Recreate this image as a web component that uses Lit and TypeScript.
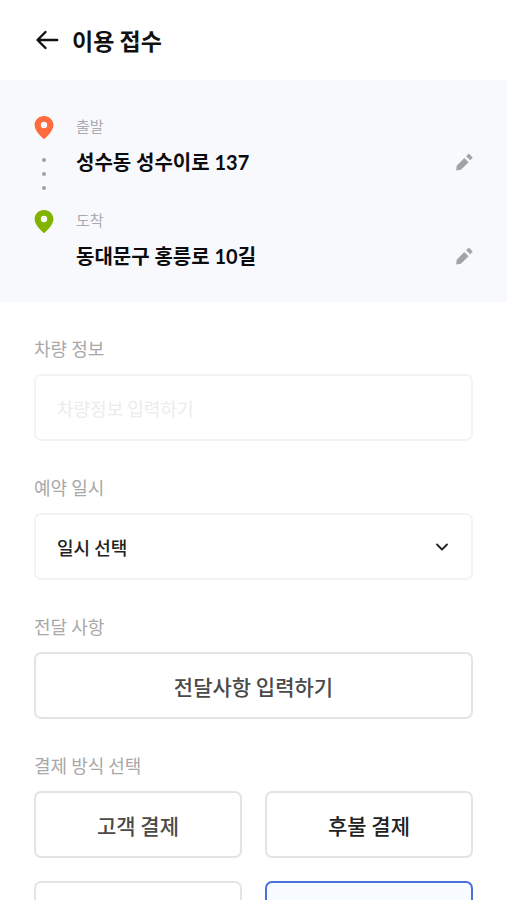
import { LitElement, html, css } from "lit";
import { customElement, property, state } from "lit/decorators.js";
import { classMap } from "lit/directives/class-map.js";

@customElement("route-stop")
class RouteStop extends LitElement {
  @property() label = "";
  @property() address = "";
  @property() kind = "start";

  static styles = css`
    :host {
      display: block;
    }
    .stop {
      display: grid;
      grid-template-columns: 20px 1fr 32px;
      column-gap: 22px;
      align-items: start;
    }
    .pin {
      display: block;
      width: 20px;
      height: 26px;
    }
    .start {
      fill: #ff6b3d;
    }
    .end {
      fill: #82b300;
    }
    .label {
      font-size: 15px;
      line-height: 24px;
      color: #a9abb0;
    }
    .dots {
      display: flex;
      flex-direction: column;
      align-items: center;
      gap: 10px;
      padding-top: 18px;
    }
    .dot {
      width: 4px;
      height: 4px;
      border-radius: 50%;
      background: #a0a1a6;
    }
    .address {
      grid-column: 2;
      font-family: "Lato", "Noto Sans CJK KR", sans-serif;
      font-size: 20px;
      font-weight: 700;
      line-height: 44px;
      color: #0c0c0e;
    }
    .edit {
      justify-self: end;
      display: flex;
      padding: 13px 0;
      border: 0;
      background: none;
      cursor: pointer;
    }
    .pencil {
      width: 18px;
      height: 18px;
      fill: #a2a3a5;
    }
  `;

  render() {
    return html`
      <div class="stop">
        <svg class=${classMap({ pin: true, start: this.kind === "start", end: this.kind === "end" })} viewBox="0 0 20 26" aria-hidden="true">
          <path fill-rule="evenodd" d="M10 2C4.700 2 .600 6.100.600 11.100c0 3.300 1.900 6.300 4.300 9.100 1.500 1.800 3.200 3.400 5.100 5 1.900-1.600 3.600-3.200 5.100-5 2.400-2.800 4.300-5.800 4.300-9.100C19.400 6.100 15.300 2 10 2zM10 7.800a3.200 3.200 0 1 1 0 6.400 3.200 3.200 0 0 1 0-6.400z"/>
        </svg>
        <span class="label">${this.label}</span>
        <span></span>
        <div class="dots">
          ${this.kind === "start"
            ? html`<span class="dot"></span><span class="dot"></span><span class="dot"></span>`
            : ""}
        </div>
        <span class="address">${this.address}</span>
        <button class="edit" type="button">
          <svg class="pencil" viewBox="0 0 18 18" aria-hidden="true">
            <path d="M1.200 17.500L1.700 12.700 9.300 5l4.300 4.300-7.700 7.500zM11.100 3.200l2-2q.7-.7 1.400 0l2.700 2.700q.7.700 0 1.400l-2 2z" />
          </svg>
        </button>
      </div>
    `;
  }
}

@customElement("app-root")
class AppRoot extends LitElement {
  @state() payment = 3;
  methods = ["고객 결제", "후불 결제", "", ""];

  static styles = css`
    :host {
      display: block;
      background: #fff;
      font-family: "Noto Sans CJK KR", sans-serif;
    }
    * {
      box-sizing: border-box;
    }
    .header {
      display: flex;
      align-items: center;
      gap: 12px;
      height: 80px;
      padding: 0 34px;
    }
    .back {
      display: flex;
      padding: 0;
      border: 0;
      background: none;
      cursor: pointer;
    }
    .arrow {
      width: 26px;
      height: 24px;
      fill: none;
      stroke: #111;
      stroke-width: 2.4;
      stroke-linecap: round;
      stroke-linejoin: round;
    }
    .title {
      margin: 0;
      font-size: 23px;
      font-weight: 700;
      line-height: 32px;
      color: #111;
    }
    .route {
      display: flex;
      flex-direction: column;
      gap: 18px;
      padding: 34px 34px 24px;
      background: #f8f9fd;
    }
    .form {
      display: flex;
      flex-direction: column;
      gap: 34px;
      padding: 34px;
    }
    .field {
      display: flex;
      flex-direction: column;
      gap: 14px;
      min-width: 0;
    }
    .caption {
      font-size: 18px;
      line-height: 24px;
      color: #a8a8a8;
    }
    .box {
      width: 100%;
      height: 67px;
      border: 2px solid #f3f3f3;
      border-radius: 7px;
      background: #fff;
      font-family: inherit;
      font-size: 18px;
      color: #222;
    }
    .text {
      padding: 0 21px;
    }
    .text::placeholder {
      color: #ececec;
      opacity: 1;
    }
    .picker {
      display: grid;
      align-items: center;
    }
    .select {
      grid-area: 1 / 1;
      padding: 0 21px;
      font-weight: 500;
      appearance: none;
    }
    .chevron {
      grid-area: 1 / 1;
      justify-self: end;
      width: 14px;
      height: 14px;
      margin-right: 24px;
      fill: none;
      stroke: #222;
      stroke-width: 1.8;
      stroke-linecap: round;
      stroke-linejoin: round;
      pointer-events: none;
    }
    .action {
      border-color: #e4e4e4;
      font-size: 21px;
      font-weight: 500;
      color: #4a4a4a;
      cursor: pointer;
    }
    .methods {
      display: grid;
      grid-template-columns: 1fr 1fr;
      gap: 23px;
    }
    .method {
      display: grid;
      place-items: center;
    }
    .radio {
      grid-area: 1 / 1;
      appearance: none;
      margin: 0;
      border-color: #e4e4e4;
      cursor: pointer;
    }
    .radio:checked {
      border-color: #4a70dc;
      background: #f8fbff;
    }
    .name {
      grid-area: 1 / 1;
      font-size: 21px;
      font-weight: 500;
      line-height: 30px;
      color: #4a4a4a;
      pointer-events: none;
    }
    .strong {
      color: #222;
    }
  `;

  render() {
    return html`
      <header class="header">
        <button class="back" type="button">
          <svg class="arrow" viewBox="0 0 26 24" aria-hidden="true">
            <path d="M23.200 12H3.800M11.500 4L3.500 12l8 8" />
          </svg>
        </button>
        <h1 class="title">이용 접수</h1>
      </header>
      <section class="route">
        <route-stop kind="start" label="출발" address="성수동 성수이로 137"></route-stop>
        <route-stop kind="end" label="도착" address="동대문구 홍릉로 10길"></route-stop>
      </section>
      <form class="form">
        <div class="field">
          <label class="caption" for="car">차량 정보</label>
          <input class="box text" id="car" type="text" placeholder="차량정보 입력하기" />
        </div>
        <div class="field">
          <label class="caption" for="date">예약 일시</label>
          <div class="picker">
            <select class="box select" id="date">
              <option>일시 선택</option>
            </select>
            <svg class="chevron" viewBox="0 0 14 14" aria-hidden="true">
              <path d="M2 4.500l5 5 5-5" />
            </svg>
          </div>
        </div>
        <div class="field">
          <label class="caption" for="note">전달 사항</label>
          <button class="box action" id="note" type="button">전달사항 입력하기</button>
        </div>
        <div class="field" role="radiogroup" aria-labelledby="pay">
          <span class="caption" id="pay">결제 방식 선택</span>
          <div class="methods">
            ${this.methods.map(
              (name, i) => html`
                <label class="method">
                  <input
                    class="box radio"
                    type="radio"
                    name="payment"
                    .checked=${this.payment === i}
                    @change=${() => (this.payment = i)}
                  />
                  <span class=${classMap({ name: true, strong: i === 1 })}>${name}</span>
                </label>
              `
            )}
          </div>
        </div>
      </form>
    `;
  }
}
